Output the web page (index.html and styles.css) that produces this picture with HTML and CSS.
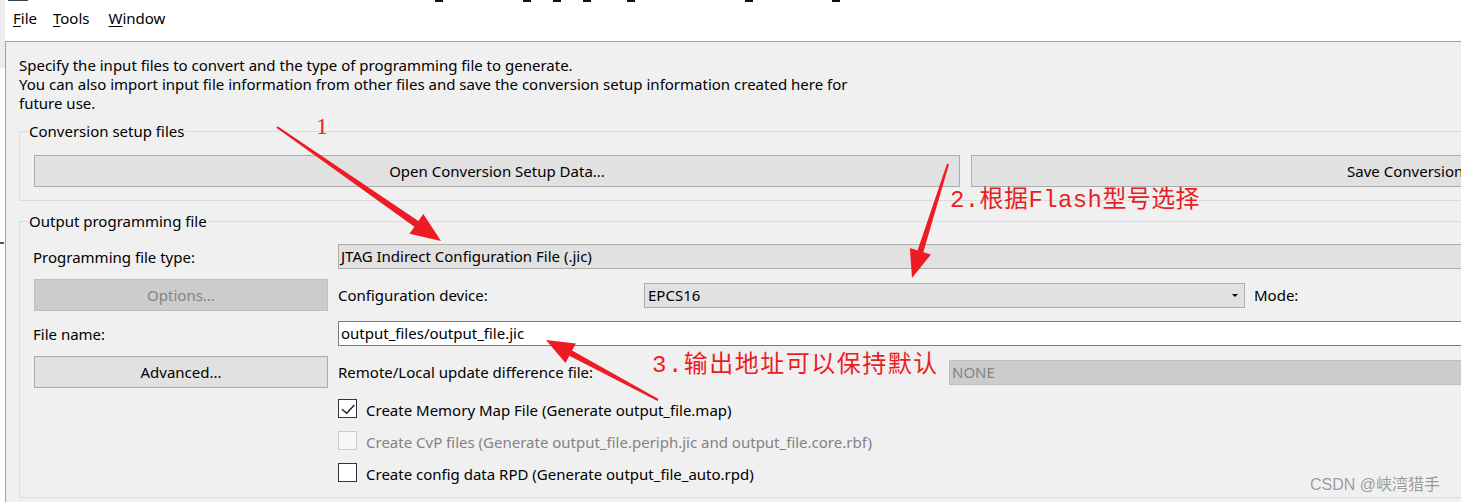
FILE: index.html
```html
<!DOCTYPE html>
<html lang="en">
<head>
<meta charset="utf-8">
<title>Convert Programming File</title>
<link rel="stylesheet" href="styles.css">
</head>
<body>
<div class="gutter">
  <div class="gutter-top"></div>
  <div class="gutter-tick"></div>
</div>
<div class="main">
  <header class="topbar">
    <div class="marks">
      <span class="mark"></span><span class="mark"></span><span class="mark"></span><span class="mark"></span>
      <span class="mark"></span><span class="mark"></span><span class="mark"></span><span class="mark"></span>
    </div>
    <nav class="menu">
      <span class="menu-item"><u>F</u>ile</span>
      <span class="menu-item"><u>T</u>ools</span>
      <span class="menu-item menu-window"><u>W</u>indow</span>
    </nav>
  </header>
  <section class="dialog">
    <p class="desc">Specify the input files to convert and the type of programming file to generate.<br>You can also import input file information from other files and save the conversion setup information created here for<br>future use.</p>

    <div class="group group-setup">
      <div class="group-title">Conversion setup files</div>
      <div class="btn-row">
        <button class="btn btn-open" type="button">Open Conversion Setup Data...</button>
        <button class="btn btn-save" type="button">Save Conversion Setup Data...</button>
      </div>
    </div>

    <div class="group group-output">
      <div class="group-title">Output programming file</div>

      <div class="row row-first">
        <span class="col1 label">Programming file type:</span>
        <div class="field">JTAG Indirect Configuration File (.jic)</div>
      </div>

      <div class="row row-tall">
        <button class="btn col1 btn-disabled" type="button" disabled>Options...</button>
        <span class="label label-device">Configuration device:</span>
        <div class="field select"><span>EPCS16</span><span class="caret"></span></div>
        <span class="label mode">Mode:</span>
      </div>

      <div class="row">
        <span class="col1 label">File name:</span>
        <div class="field field-input">output_files/output_file.jic</div>
      </div>

      <div class="row row-tall">
        <button class="btn col1" type="button">Advanced...</button>
        <span class="label label-remote">Remote/Local update difference file:</span>
        <div class="field field-disabled">NONE</div>
      </div>

      <div class="check-row check-first">
        <span class="box"><svg class="tick" width="17" height="17" viewBox="0 0 17 17"><path d="M3 9.3 L7.7 13.3 L15.3 5" fill="none" stroke="#1e1e1e" stroke-width="1.4"/></svg></span>
        <span class="check-label">Create Memory Map File (Generate output_file.map)</span>
      </div>
      <div class="check-row">
        <span class="box box-disabled"></span>
        <span class="check-label check-disabled">Create CvP files (Generate output_file.periph.jic and output_file.core.rbf)</span>
      </div>
      <div class="check-row">
        <span class="box"></span>
        <span class="check-label">Create config data RPD (Generate output_file_auto.rpd)</span>
      </div>
    </div>
  </section>
</div>

<svg class="arrows" width="1461" height="502" viewBox="0 0 1461 502">
  <polygon points="276.4,127.8 414.4,226.8 409.5,233.8 441,241 423.3,214.0 418.4,221.0 277.6,126.2"/>
  <polygon points="947.0,163.7 917.5,250.4 909.9,248.0 912,278 930.9,254.6 923.3,252.2 949.0,164.3"/>
  <polygon points="658.5,399.1 572.1,350.6 575.9,343.5 546,340 565.5,362.9 569.3,355.8 657.5,400.9"/>
</svg>
<span class="annot annot-1">1</span>
<span class="annot annot-2">2.根据Flash型号选择</span>
<span class="annot annot-3">3.输出地址可以保持默认</span>
<span class="watermark">CSDN @峡湾猎手</span>
</body>
</html>
```

FILE: styles.css
```css
* { box-sizing: border-box; }
html, body { margin: 0; }
body {
  position: relative;
  display: flex;
  width: 1461px;
  height: 502px;
  overflow: hidden;
  background: #fff;
  font-family: "Noto Sans", "Open Sans", sans-serif;
  font-size: 15px;
  color: #000;
}

/* left strip outside the dialog */
.gutter { flex: 0 0 5px; display: flex; flex-direction: column; }
.gutter-top { height: 68px; background: #ececec; }
.gutter-tick { margin-top: 174px; width: 4px; height: 2px; background: #5a5a5a; }

.main { flex: 0 0 2000px; display: flex; flex-direction: column; }

/* top bar */
.topbar { height: 41px; background: #fff; display: flex; flex-direction: column; }
.marks { display: flex; height: 2px; }
.mark { flex: none; width: 8px; height: 2px; background: #111; }
.mark:nth-child(1) { margin-left: 3px; width: 20px; height: 1px; background: #3b4352; }
.mark:nth-child(2) { margin-left: 407px; }
.mark:nth-child(3) { margin-left: 80px; }
.mark:nth-child(4) { margin-left: 22px; }
.mark:nth-child(5) { margin-left: 22px; }
.mark:nth-child(6) { margin-left: 36px; }
.mark:nth-child(7) { margin-left: 110px; }
.mark:nth-child(8) { margin-left: 79px; }

.menu { display: flex; gap: 16px; padding-left: 8px; margin-top: 6px; font-size: 15px; line-height: 20px; }
.menu-window { margin-left: 3px; }
.menu u { text-underline-offset: 2px; }

/* dialog */
.dialog {
  flex: 1;
  background: #f0f0f0;
  border-top: 1px solid #a0a0a0;
  border-left: 1px solid #a0a0a0;
  padding: 14px 0 0 13px;
}
.desc { margin: 0; line-height: 19px; }

.group { border: 1px solid #dcdcdc; padding: 0 0 0 14px; }
.group-title {
  width: fit-content;
  margin: -10px 0 0 -6px;
  padding: 0 1px;
  background: #f0f0f0;
  line-height: 19px;
}
.group-setup { margin-top: 18px; padding-bottom: 13px; }
.group-output { margin-top: 20px; padding-bottom: 15px; }

.btn-row { display: flex; gap: 11px; margin-top: 14px; }
.btn {
  flex: none;
  font: inherit;
  height: 32px;
  padding: 0;
  background: #e1e1e1;
  border: 1px solid #adadad;
  color: #000;
}
.btn-open { width: 926px; }
.btn-save { width: 962px; }
.btn-disabled { background: #cccccc; border-color: #bfbfbf; color: #838383; }

.row { display: flex; align-items: center; height: 25px; margin-top: 10px; }
.row-first { margin-top: 13px; }
.row-tall { height: 32px; }
.col1 { flex: none; width: 294px; margin-right: 10px; }
.label { white-space: nowrap; }
.row > .label.col1 { margin-left: -1px; margin-right: 11px; }

.field {
  flex: 1;
  height: 25px;
  padding: 0 2px;
  border: 1px solid #adadad;
  background: #e1e1e1;
  line-height: 23px;
  white-space: nowrap;
}
.field-input { background: #fff; border-color: #7a7a7a; }
.field-disabled { background: #cccccc; border-color: #bfbfbf; color: #838383; }

.label-device { flex: none; width: 306px; }
.select {
  flex: none;
  width: 601px;
  display: flex;
  align-items: center;
  justify-content: space-between;
  padding: 0 3px;
}
.caret {
  width: 0; height: 0;
  margin-right: 3px;
  border-left: 3px solid transparent;
  border-right: 3px solid transparent;
  border-top: 3px solid #000;
}
.mode { margin-left: 9px; }
.label-remote { flex: none; width: 611px; }

.check-row { display: flex; align-items: center; gap: 9px; height: 19px; margin: 13px 0 0 304px; }
.check-first { margin-top: 11px; }
.box {
  flex: none;
  width: 19px; height: 19px;
  border: 1px solid #333;
  background: #fff;
  display: flex;
}
.box-disabled { border-color: #cccccc; background: #f7f7f7; }
.check-label { line-height: 19px; padding-top: 3px; white-space: nowrap; }
.check-disabled { color: #838383; }

/* annotations laid over the screenshot */
.arrows { position: absolute; left: 0; top: 0; fill: #ed1c24; pointer-events: none; }
.annot {
  position: absolute;
  color: #ed1c24;
  font-family: "Liberation Mono", "Noto Sans CJK SC", monospace;
  font-size: 24px;
  line-height: 24px;
  white-space: nowrap;
}
.annot-1 { left: 316px; top: 114px; font-family: "Liberation Serif", serif; }
.annot-2 { left: 950px; top: 189px; letter-spacing: 0.4px; }
.annot-3 { left: 652px; top: 354px; letter-spacing: 1.5px; }

.watermark {
  position: absolute;
  left: 1310px;
  top: 475px;
  font-family: "Liberation Sans", "Noto Sans CJK SC", sans-serif;
  font-size: 16px;
  line-height: 19px;
  color: #9a9a9a;
  text-shadow: 0 0 1px #fff;
}
```
